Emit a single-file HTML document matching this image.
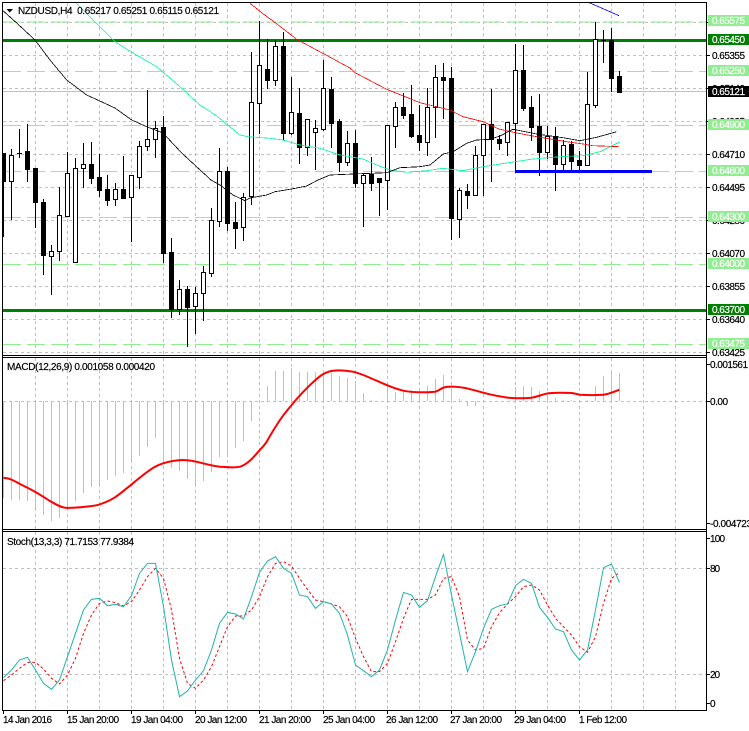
<!DOCTYPE html>
<html>
<head>
<meta charset="utf-8">
<title>NZDUSD,H4</title>
<style>
html,body{margin:0;padding:0;background:#fff;width:749px;height:731px;overflow:hidden}
svg{display:block;position:absolute;left:0;top:0}
text{font-family:"Liberation Sans",Arial,sans-serif;font-size:10px;fill:#000;stroke:#000;stroke-width:.18px}
.w text{fill:#fff;stroke:#fff}
</style>
</head>
<body>
<svg width="749" height="731" viewBox="0 0 749 731" xmlns="http://www.w3.org/2000/svg">
<rect width="749" height="731" fill="#fff"/>

<!-- grid -->
<g fill="none" stroke="#c0c0c0" stroke-width="1" stroke-dasharray="3 3" shape-rendering="crispEdges">
<path d="M3 22.5H706M3 55.5H706M3 88.5H706M3 121.5H706M3 154.5H706M3 187.5H706M3 220.5H706M3 253.5H706M3 286.5H706M3 319.5H706M3 352.5H706"/>
<path d="M3 401.5H706M3 568.5H706M3 674.5H706"/>
<path d="M35.5 3V355M67.5 3V355M99.5 3V355M131.5 3V355M163.5 3V355M195.5 3V355M227.5 3V355M259.5 3V355M291.5 3V355M323.5 3V355M355.5 3V355M387.5 3V355M419.5 3V355M451.5 3V355M483.5 3V355M515.5 3V355M547.5 3V355M579.5 3V355M611.5 3V355M643.5 3V355M675.5 3V355"/>
<path d="M35.5 358V529M67.5 358V529M99.5 358V529M131.5 358V529M163.5 358V529M195.5 358V529M227.5 358V529M259.5 358V529M291.5 358V529M323.5 358V529M355.5 358V529M387.5 358V529M419.5 358V529M451.5 358V529M483.5 358V529M515.5 358V529M547.5 358V529M579.5 358V529M611.5 358V529M643.5 358V529M675.5 358V529"/>
<path d="M35.5 532V710M67.5 532V710M99.5 532V710M131.5 532V710M163.5 532V710M195.5 532V710M227.5 532V710M259.5 532V710M291.5 532V710M323.5 532V710M355.5 532V710M387.5 532V710M419.5 532V710M451.5 532V710M483.5 532V710M515.5 532V710M547.5 532V710M579.5 532V710M611.5 532V710M643.5 532V710M675.5 532V710"/>
</g>

<!-- ask line -->
<path d="M3 91.5H706" stroke="#c0c0c0" stroke-width="1" shape-rendering="crispEdges"/>

<!-- light green levels -->
<path d="M3 22H706M3 71.5H706M3 125.5H706M3 171.5H706M3 217.5H706M3 264.5H706M3 344.5H706" fill="none" stroke="#90ee90" stroke-width="1" stroke-dasharray="18 6" shape-rendering="crispEdges"/>

<!-- dark green levels -->
<rect x="3" y="39" width="703" height="3" fill="#008000"/>
<rect x="3" y="309" width="703" height="3" fill="#008000"/>

<!-- candle wicks -->
<path shape-rendering="crispEdges" fill="none" stroke="#000" stroke-width="1" d="M3.5 153V237M11.5 149V220M19.5 129V158M27.5 124V182M35.5 168V228M43.5 199V275M51.5 245V295M59.5 187V261M67.5 152V216M75.5 158V262M83.5 143V188M91.5 142V184M99.5 154V197M107.5 175V206M115.5 183V206M123.5 156V199M131.5 175V242M139.5 141V189M147.5 90V151M155.5 121V158M163.5 116V263M171.5 238V318M179.5 280V315M187.5 286V347M195.5 287V334M203.5 266V321M211.5 208V277M219.5 148V227M227.5 167V231M235.5 202V249M243.5 193V241M251.5 52V205M259.5 21V134M267.5 39V89M275.5 40V86M283.5 32V140M291.5 77V135M299.5 88V164M307.5 119V156M315.5 120V170M323.5 60V131M331.5 77V148M339.5 119V172M347.5 131V166M355.5 130V188M363.5 173V227M371.5 157V191M379.5 178V216M387.5 125V210M395.5 102V148M403.5 93V119M411.5 85V138M419.5 105V151M427.5 88V156M435.5 65V138M443.5 63V119M451.5 67V240M459.5 188V238M467.5 184V209M475.5 146V196M483.5 124V196M491.5 89V182M499.5 135V150M507.5 122V156M515.5 44V171M523.5 45V111M531.5 96V141M539.5 94V176M547.5 126V159M555.5 127V191M563.5 140V170M571.5 141V170M579.5 151V171M587.5 72V166M595.5 22V108M603.5 30V63M611.5 28V92M619.5 71V93"/>

<!-- white bodies -->
<path shape-rendering="crispEdges" fill="#fff" stroke="#000" stroke-width="1" d="M9.5 155.5h4v26h-4zM49.5 251.5h4v5h-4zM57.5 215.5h4v36h-4zM65.5 173.5h4v43h-4zM73.5 168.5h4v94h-4zM81.5 164.5h4v4h-4zM113.5 189.5h4v10h-4zM129.5 175.5h4v22h-4zM137.5 146.5h4v31h-4zM145.5 139.5h4v7h-4zM153.5 128.5h4v11h-4zM177.5 289.5h4v20h-4zM193.5 293.5h4v13h-4zM201.5 272.5h4v21h-4zM209.5 220.5h4v53h-4zM217.5 171.5h4v50h-4zM241.5 197.5h4v30h-4zM249.5 102.5h4v94h-4zM257.5 65.5h4v38h-4zM273.5 46.5h4v34h-4zM289.5 112.5h4v21h-4zM305.5 119.5h4v28h-4zM313.5 128.5h4v4h-4zM321.5 88.5h4v41h-4zM345.5 143.5h4v19h-4zM361.5 175.5h4v8h-4zM385.5 125.5h4v55h-4zM393.5 107.5h4v19h-4zM425.5 107.5h4v35h-4zM433.5 77.5h4v30h-4zM457.5 190.5h4v29h-4zM473.5 155.5h4v40h-4zM481.5 124.5h4v31h-4zM505.5 122.5h4v20h-4zM513.5 70.5h4v53h-4zM545.5 136.5h4v16h-4zM561.5 145.5h4v19h-4zM585.5 104.5h4v61h-4zM593.5 39.5h4v66h-4z"/>

<!-- black bodies -->
<path shape-rendering="crispEdges" fill="#000" d="M3 153h3v29h-3zM17 153h5v1h-5zM25 151h5v19h-5zM33 168h5v35h-5zM41 202h5v54h-5zM89 164h5v15h-5zM97 177h5v14h-5zM105 189h5v12h-5zM121 189h5v10h-5zM161 127h5v127h-5zM169 252h5v58h-5zM185 289h5v19h-5zM225 171h5v53h-5zM233 222h5v7h-5zM265 69h5v12h-5zM281 46h5v88h-5zM297 113h5v35h-5zM329 89h5v35h-5zM337 121h5v42h-5zM353 143h5v41h-5zM369 174h5v10h-5zM377 178h5v5h-5zM401 107h5v9h-5zM409 114h5v23h-5zM417 135h5v8h-5zM441 77h5v4h-5zM449 78h5v141h-5zM465 191h5v5h-5zM489 124h5v16h-5zM497 139h5v5h-5zM521 70h5v39h-5zM529 107h5v21h-5zM537 126h5v27h-5zM553 136h5v29h-5zM569 144h5v18h-5zM577 160h5v6h-5zM601 40h5v1h-5zM609 40h5v39h-5zM617 76h5v17h-5z"/>

<!-- moving averages -->
<g fill="none" stroke-width="0.8" shape-rendering="crispEdges">
<polyline stroke="#ff0000" points="250,3.3 262,13 274,21.7 296.7,39.3 350,68 355,72.7 386.7,89.3 420,102.7 450,110 463,116.7 483,121.7 499,129 516.7,133 536.7,136.7 566.7,141.7 583,144 593,145.7 619,146.7"/>
<polyline stroke="#00fa9a" points="76,2.7 96.7,23.3 115,41.7 133,53 156.7,66.7 180,86.7 200,105 216.7,116 240,135 248.3,136.7 270,138.3 283,140 300,145 320,148.3 340,155 363,159 376.7,165 390,170 406.7,172.3 426.7,170.7 443,168.3 463,170.7 483,166.7 500,164 533,159 560,156.7 583,155.7 600,151.7 619,142.3"/>
<polyline stroke="#000" points="3,10.7 16.7,23 35,40 50,60 66.7,80 86.7,95 115,108 131.7,120 146.7,126.7 163,133 181.7,153 211,180 220,185 233,195 245,200.7 250,198 266.7,195 275,191.7 290,189.3 306.7,186 318,180 330,175 353,174 386.7,172.7 400,167.7 420,166.7 430,165 443.3,154 453,151.7 466.7,143.3 476.7,140 490,139.3 500,136 513,129.3 536.7,134 563,137.7 580,140.7 596.7,137.3 616.7,131.7"/>
<polyline stroke="#0000ff" points="589.3,2.7 619,15.7"/>
</g>

<!-- blue level -->
<rect x="515" y="170" width="137" height="3" fill="#0000ff"/>

<!-- MACD histogram -->
<path shape-rendering="crispEdges" fill="none" stroke="#c0c0c0" stroke-width="1" d="M3.5 401V498M11.5 401V500M19.5 401V500M27.5 401V501M35.5 401V511M43.5 401V515M51.5 401V521M59.5 401V518M67.5 401V510M75.5 401V501M83.5 401V493M91.5 401V487M99.5 401V485M107.5 401V480M115.5 401V476M123.5 401V473M131.5 401V463M139.5 401V456M147.5 401V447M155.5 401V438M163.5 401V463M171.5 401V468M179.5 401V471M187.5 401V479M195.5 401V484M203.5 401V481M211.5 401V472M219.5 401V457M227.5 401V455M235.5 401V448M243.5 401V441M251.5 401V421M267.5 386V401M275.5 371V401M283.5 371V401M291.5 368V401M299.5 372V401M307.5 372V401M315.5 372V401M323.5 373V401M331.5 373V401M339.5 376V401M347.5 378V401M355.5 381V401M363.5 393V401M371.5 400V401M387.5 386V401M395.5 392V401M403.5 390V401M411.5 390V401M419.5 390V401M427.5 386V401M435.5 379V401M443.5 375V401M451.5 388V401M459.5 399V401M467.5 401V406M475.5 401V406M515.5 387V401M523.5 386V401M531.5 387V401M539.5 391V401M547.5 393V401M555.5 398V401M563.5 400V401M571.5 400V401M579.5 400V401M587.5 400V401M595.5 386V401M603.5 376V401M611.5 373V401M619.5 373V401"/>

<!-- MACD signal -->
<path fill="none" stroke="#ff0000" stroke-width="2" stroke-linejoin="round" d="M3.3 477.7C6 478 8 478.4 10 479C14 480.5 17 482.5 20 484C25 486.5 30 489 35 491.7C40 494.5 45 498 50 501C55 504 60 507 65 507.7C71 508.2 77 507.6 83 507C89 506.4 95 506 100 504.3C105 502.6 110 500.5 115 497.3C120 494 125 489.6 130 485.7C135 481.5 141 476.5 146.7 472.3C152 468.5 157 465 163.3 463.3C169 461.5 177 460 183.3 460C190 460 197 461.8 203 463.3C209 464.8 214 466.2 220 466.7C227 467.2 234 468 240 466.7C247 464.5 253 458 258.3 451.7C261 448.5 264 446 266.7 441.7C270 436 273 430.5 276.7 425C281 418 286 411.5 291.7 405C296 399.5 301 394 306.7 388.3C311 384 316 379 321.7 375C325 372.8 329 371.2 333.3 370.7C340 370 347 370.6 353 371.7C361 373.5 368 377 375 380C380 382.2 384 384 388.3 385.7C393 387.6 398 389.4 403.3 390.7C413 392.5 425 392.6 435 391.7C438 391.2 440 389 443.3 387.7C447 386.4 451 386.5 455 386.7C459 387 463 387.4 466.7 388.3C472 389.6 478 391.2 483.3 392.7C491 394.8 500 396.6 508.3 397.7C516 398.4 524 398.4 531.7 397.7C537 396.8 543 394.2 548.3 393.3C556 392.6 564 392.6 571.7 393C575 393.3 577 394.2 580 394.7C588 395.2 596 395.2 603.3 394.7C609 394 614 391.8 619.3 389.7"/>

<!-- Stochastic -->
<g transform="translate(0,530) scale(0.33333)" fill="none" stroke-width="3">
<polyline stroke="#ff0000" stroke-dasharray="8 7" points="10.5,452 34.5,435 58.5,415 82.5,397 106.5,397 130.5,417 154.5,445 178.5,462 202.5,435 226.5,385 250.5,310 274.5,255 298.5,220 322.5,213 346.5,218 370.5,228 394.5,215 418.5,180 442.5,140 466.5,115 490.5,145 514.5,240 538.5,385 562.5,460 586.5,475 610.5,450 634.5,410 658.5,350 682.5,290 706.5,258 730.5,258 754.5,240 778.5,200 802.5,140 826.5,100 850.5,95 874.5,108 898.5,145 922.5,178 946.5,210 970.5,215 994.5,222 1018.5,230 1042.5,260 1066.5,325 1090.5,380 1114.5,425 1138.5,425 1162.5,400 1186.5,335 1210.5,265 1234.5,208 1258.5,208 1282.5,208 1306.5,195 1330.5,145 1354.5,140 1378.5,200 1402.5,330 1426.5,360 1450.5,355 1474.5,290 1498.5,248 1522.5,222 1546.5,200 1570.5,170 1594.5,165 1618.5,180 1642.5,225 1666.5,265 1690.5,290 1714.5,315 1738.5,350 1762.5,367 1786.5,320 1810.5,220 1834.5,145 1858.5,128"/>
<polyline stroke="#20b2aa" points="10.5,443 34.5,420 58.5,390 82.5,382 106.5,420 130.5,460 154.5,478 178.5,450 202.5,380 226.5,310 250.5,240 274.5,208 298.5,205 322.5,227 346.5,223 370.5,230 394.5,197 418.5,130 442.5,100 466.5,100 490.5,230 514.5,390 538.5,500 562.5,483 586.5,450 610.5,422 634.5,360 658.5,280 682.5,247 706.5,252 730.5,267 754.5,200 778.5,127 802.5,93 826.5,80 850.5,115 874.5,130 898.5,195 922.5,200 946.5,235 970.5,215 994.5,222 1018.5,250 1042.5,315 1066.5,405 1090.5,422 1114.5,440 1138.5,420 1162.5,360 1186.5,270 1210.5,187 1234.5,195 1258.5,232 1282.5,212 1306.5,140 1330.5,73 1354.5,195 1378.5,310 1402.5,425 1426.5,365 1450.5,295 1474.5,238 1498.5,227 1522.5,222 1546.5,167 1570.5,148 1594.5,160 1618.5,232 1642.5,262 1666.5,297 1690.5,305 1714.5,360 1738.5,390 1762.5,360 1786.5,240 1810.5,113 1834.5,102 1858.5,158"/>
</g>

<!-- frames -->
<g shape-rendering="crispEdges" fill="none" stroke="#000" stroke-width="1">
<path d="M2.5 2.5H706.5V710.5H2.5Z"/>
<path d="M2 355.5H707M2 357.5H707M2 529.5H707M2 531.5H707"/>
<!-- axis ticks -->
<path d="M707 22.5h3M707 55.5h3M707 88.5h3M707 121.5h3M707 154.5h3M707 187.5h3M707 220.5h3M707 253.5h3M707 286.5h3M707 319.5h3M707 352.5h3M707 364.5h3M707 401.5h3M707 523.5h3M707 538.5h3M707 568.5h3M707 674.5h3M707 703.5h3"/>
<path d="M3.5 711v3M67.5 711v3M131.5 711v3M195.5 711v3M259.5 711v3M323.5 711v3M387.5 711v3M451.5 711v3M515.5 711v3M579.5 711v3"/>
</g>

<!-- title -->
<polygon points="6.5,9 13,9 9.75,12.5" fill="#000"/>
<text x="18" y="14" textLength="201" lengthAdjust="spacing" xml:space="preserve">NZDUSD,H4  0.65217 0.65251 0.65115 0.65121</text>
<text x="7" y="370" textLength="148" lengthAdjust="spacing">MACD(12,26,9) 0.001058 0.000420</text>
<text x="7" y="545" textLength="127" lengthAdjust="spacing">Stoch(13,3,3) 71.7153 77.9384</text>

<!-- axis labels -->
<g>
<text x="712" y="26" textLength="33">0.65570</text>
<text x="712" y="59" textLength="33">0.65355</text>
<text x="712" y="92" textLength="33">0.65140</text>
<text x="712" y="125" textLength="33">0.64925</text>
<text x="712" y="158" textLength="33">0.64710</text>
<text x="712" y="191" textLength="33">0.64495</text>
<text x="712" y="224" textLength="33">0.64280</text>
<text x="712" y="257" textLength="33">0.64070</text>
<text x="712" y="290" textLength="33">0.63855</text>
<text x="712" y="323" textLength="33">0.63640</text>
<text x="712" y="356" textLength="33">0.63425</text>
<text x="710" y="368" textLength="38">0.001561</text>
<text x="710" y="405" textLength="18">0.00</text>
<text x="710" y="527" textLength="42">-0.004723</text>
<text x="710" y="542" textLength="15">100</text>
<text x="710" y="572" textLength="10">80</text>
<text x="710" y="678" textLength="10">20</text>
<text x="710" y="707" textLength="5">0</text>
</g>

<!-- price tags -->
<rect x="708" y="15" width="41" height="11" fill="#90ee90"/>
<rect x="708" y="34" width="41" height="11" fill="#008000"/>
<rect x="708" y="65" width="41" height="11" fill="#90ee90"/>
<rect x="708" y="86" width="41" height="11" fill="#000"/>
<rect x="708" y="119" width="41" height="11" fill="#90ee90"/>
<rect x="708" y="165" width="41" height="11" fill="#90ee90"/>
<rect x="708" y="211" width="41" height="11" fill="#90ee90"/>
<rect x="708" y="258" width="41" height="11" fill="#90ee90"/>
<rect x="708" y="304" width="41" height="11" fill="#008000"/>
<rect x="708" y="338" width="41" height="11" fill="#90ee90"/>
<g class="w">
<text x="712" y="24" textLength="33">0.65575</text>
<text x="712" y="43" textLength="33">0.65450</text>
<text x="712" y="74" textLength="33">0.65250</text>
<text x="712" y="95" textLength="33">0.65121</text>
<text x="712" y="128" textLength="33">0.64900</text>
<text x="712" y="174" textLength="33">0.64600</text>
<text x="712" y="220" textLength="33">0.64300</text>
<text x="712" y="267" textLength="33">0.64000</text>
<text x="712" y="313" textLength="33">0.63700</text>
<text x="712" y="347" textLength="33">0.63475</text>
</g>

<!-- time axis -->
<g>
<text x="3" y="723" textLength="49">14 Jan 2016</text>
<text x="67" y="723" textLength="52">15 Jan 20:00</text>
<text x="131" y="723" textLength="52">19 Jan 04:00</text>
<text x="195" y="723" textLength="52">20 Jan 12:00</text>
<text x="259" y="723" textLength="52">21 Jan 20:00</text>
<text x="323" y="723" textLength="52">25 Jan 04:00</text>
<text x="386" y="723" textLength="52">26 Jan 12:00</text>
<text x="450" y="723" textLength="52">27 Jan 20:00</text>
<text x="514" y="723" textLength="52">29 Jan 04:00</text>
<text x="579" y="723" textLength="48">1 Feb 12:00</text>
</g>
</svg>
</body>
</html>
